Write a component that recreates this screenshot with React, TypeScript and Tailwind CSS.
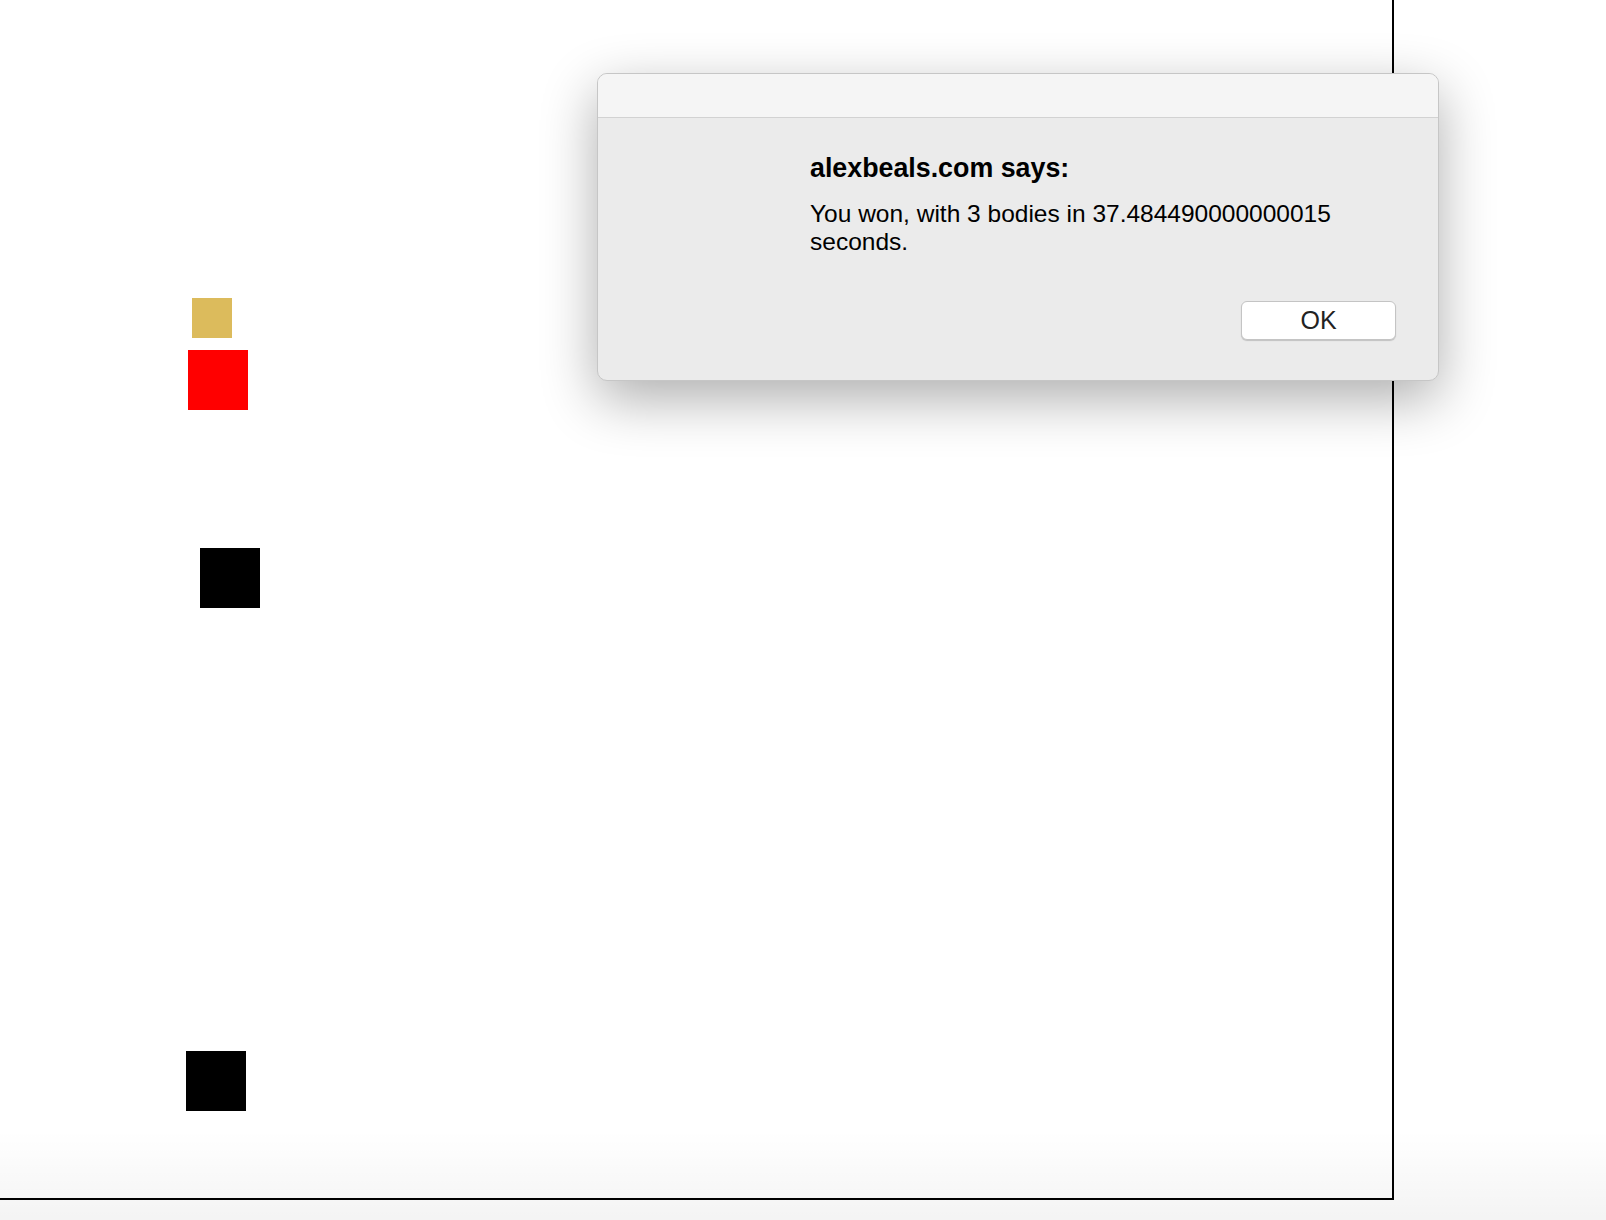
const bodies = [
  { id: "gold", x: 192, y: 298, size: 40, color: "bg-[#dcbb5c]" },
  { id: "red", x: 188, y: 350, size: 60, color: "bg-[#ff0000]" },
  { id: "b1", x: 200, y: 548, size: 60, color: "bg-black" },
  { id: "b2", x: 186, y: 1051, size: 60, color: "bg-black" },
];

const AlertDialog: React.FC = () => (
  <div className="absolute left-[597px] top-[73px] w-[842px] h-[308px] flex flex-col rounded-[10px] border border-[#c6c6c6] bg-[#ebebeb] shadow-[0_18px_55px_rgba(0,0,0,0.32)] overflow-hidden">
    {/* title bar */}
    <div className="h-[44px] shrink-0 bg-[#f5f5f5] border-b border-[#d2d2d2]" />
    <div className="flex flex-col flex-1 pl-[212px] pr-[42px] pt-[35px] pb-[40px]">
      <h2 className="text-[26.8px] leading-[30px] font-bold text-black">alexbeals.com says:</h2>
      <p className="mt-[17px] w-[540px] text-[24.5px] leading-[28px] text-black">
        You won, with 3 bodies in 37.484490000000015 seconds.
      </p>
      <div className="flex justify-end mt-auto">
        <button className="w-[155px] h-[39px] rounded-[6px] border border-[#c4c4c4] bg-white shadow-[0_1px_1px_rgba(0,0,0,0.18)] text-[25px] leading-none text-[#222]">
          OK
        </button>
      </div>
    </div>
  </div>
);

export default function App() {
  return (
    <div
      className="relative w-[1606px] h-[1220px] overflow-hidden bg-white"
      style={{ fontFamily: '"Liberation Sans", Arial, sans-serif' }}
    >
      {/* game canvas */}
      <div className="relative w-[1394px] h-[1200px] border-r-2 border-b-2 border-black">
        {bodies.map((b) => (
          <div
            key={b.id}
            className={`absolute ${b.color}`}
            style={{ left: b.x, top: b.y, width: b.size, height: b.size }}
          />
        ))}
      </div>

      {/* soft fade at bottom of window */}
      <div className="pointer-events-none absolute left-0 right-0 bottom-0 h-[90px] bg-linear-to-b from-transparent to-black/[0.045]" />

      <AlertDialog />
    </div>
  );
}
